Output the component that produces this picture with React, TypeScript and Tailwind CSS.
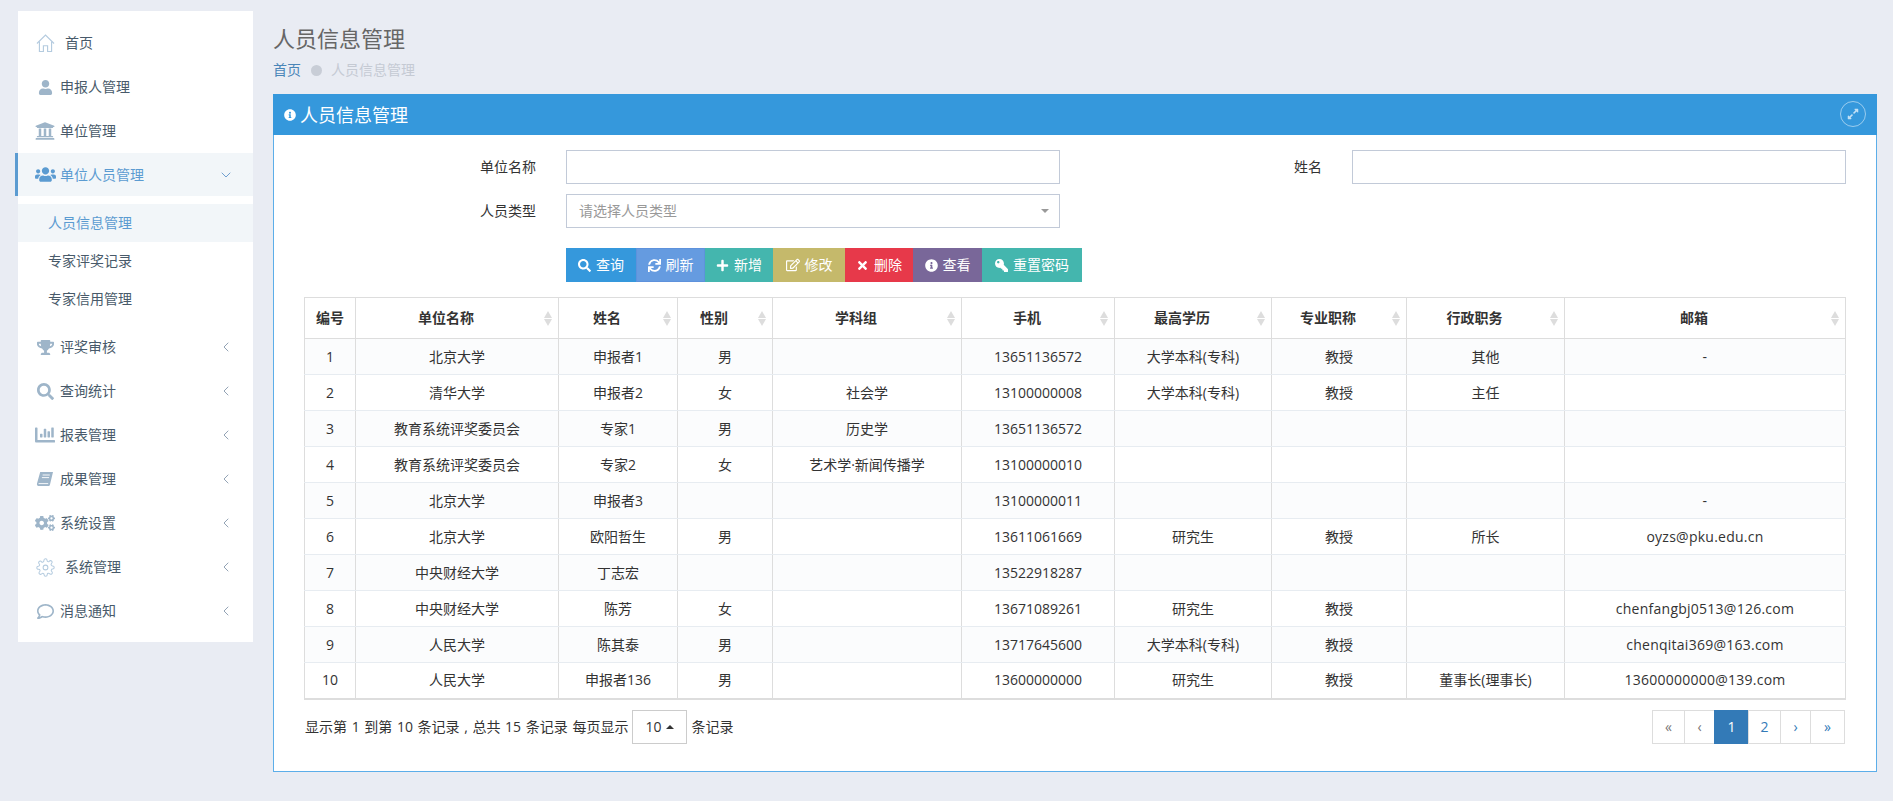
import type { ReactNode } from 'react';
import { ChevronDown, ChevronLeft } from 'lucide-react';
import {
  FaChartBar,
  FaCogs,
  FaExpandAlt,
  FaInfoCircle,
  FaKey,
  FaPlus,
  FaRegComment,
  FaRegEdit,
  FaSearch,
  FaSync,
  FaTimes,
  FaTrophy,
  FaUniversity,
  FaUser,
  FaUsers,
} from 'react-icons/fa';

const rows = [
  ['1', '北京大学', '申报者1', '男', '', '13651136572', '大学本科(专科)', '教授', '其他', '-'],
  ['2', '清华大学', '申报者2', '女', '社会学', '13100000008', '大学本科(专科)', '教授', '主任', ''],
  ['3', '教育系统评奖委员会', '专家1', '男', '历史学', '13651136572', '', '', '', ''],
  ['4', '教育系统评奖委员会', '专家2', '女', '艺术学·新闻传播学', '13100000010', '', '', '', ''],
  ['5', '北京大学', '申报者3', '', '', '13100000011', '', '', '', '-'],
  ['6', '北京大学', '欧阳哲生', '男', '', '13611061669', '研究生', '教授', '所长', 'oyzs@pku.edu.cn'],
  ['7', '中央财经大学', '丁志宏', '', '', '13522918287', '', '', '', ''],
  ['8', '中央财经大学', '陈芳', '女', '', '13671089261', '研究生', '教授', '', 'chenfangbj0513@126.com'],
  ['9', '人民大学', '陈其泰', '男', '', '13717645600', '大学本科(专科)', '教授', '', 'chenqitai369@163.com'],
  ['10', '人民大学', '申报者136', '男', '', '13600000000', '研究生', '教授', '董事长(理事长)', '13600000000@139.com'],
];

const columns = [
  { title: '编号', width: 'w-[51px]' },
  { title: '单位名称', width: 'w-[203px]' },
  { title: '姓名', width: 'w-[119px]' },
  { title: '性别', width: 'w-[95px]' },
  { title: '学科组', width: 'w-[189px]' },
  { title: '手机', width: 'w-[153px]' },
  { title: '最高学历', width: 'w-[157px]' },
  { title: '专业职称', width: 'w-[135px]' },
  { title: '行政职务', width: 'w-[158px]' },
  { title: '邮箱', width: 'w-[281px]' },
];

function HomeIcon() {
  return (
    <svg viewBox="0 0 20 20" className="h-[19px] w-[19px]" fill="none" stroke="#b4cbdf" strokeWidth="1.2">
      <path d="M1 10 10 1.2 19 10" />
      <path d="M3.6 8v10.4h4.2v-6h4.4v6h4.2V8" />
    </svg>
  );
}

// fa 4 style slanted book
function BookIcon() {
  return (
    <svg viewBox="0 0 18 16" className="h-[16px] w-[18px]">
      <path d="M4.2 1H17l-3 12.4c-.2.9-.8 1.6-2 1.6H3C1.4 15 .6 13.8 1 12.4z" fill="currentColor" />
      <path d="M6.6 4h7.2M5.9 6.6h7.2M2.6 12.6h9.6" stroke="#ffffff" strokeWidth="0.9" fill="none" />
    </svg>
  );
}

function GearIcon() {
  return (
    <svg viewBox="0 0 24 24" className="h-[19px] w-[19px]" fill="none" stroke="#b4cbdf" strokeWidth="1.3">
      <circle cx="12" cy="12" r="3" />
      <path d="M19.4 15a1.6 1.6 0 0 0 .3 1.8l.1.1a2 2 0 1 1-2.8 2.8l-.1-.1a1.6 1.6 0 0 0-2.7 1.1V21a2 2 0 1 1-4 0v-.1a1.6 1.6 0 0 0-2.7-1.1l-.1.1a2 2 0 1 1-2.8-2.8l.1-.1a1.6 1.6 0 0 0-1.1-2.7H3a2 2 0 1 1 0-4h.1a1.6 1.6 0 0 0 1.1-2.7l-.1-.1a2 2 0 1 1 2.8-2.8l.1.1a1.6 1.6 0 0 0 1.8.3H9a1.6 1.6 0 0 0 1-1.5V3a2 2 0 1 1 4 0v.1a1.6 1.6 0 0 0 2.7 1.1l.1-.1a2 2 0 1 1 2.8 2.8l-.1.1a1.6 1.6 0 0 0-.3 1.8V9a1.6 1.6 0 0 0 1.5 1H21a2 2 0 1 1 0 4h-.1a1.6 1.6 0 0 0-1.5 1z" />
    </svg>
  );
}

function MenuItem({
  icon,
  label,
  textGap = 'ml-1',
  active = false,
  arrow = true,
}: {
  icon: ReactNode;
  label: string;
  textGap?: string;
  active?: boolean;
  arrow?: boolean;
}) {
  return (
    <div className={`relative flex items-center pl-4 text-sm ${active ? 'h-[43px] bg-[#f2f6f9] text-[#5b9bd1]' : 'h-11 text-[#485a6a]'}`}>
      {active && <span className="absolute -left-[3px] top-0 h-full w-[3px] bg-[#5b9bd1]" />}
      <span className={`flex w-[22px] justify-center ${active ? 'text-[#5b9bd1]' : 'text-[#9eb5c9]'}`}>{icon}</span>
      <span className={textGap}>{label}</span>
      {active && <ChevronDown className="absolute right-[19px] h-4 w-4 text-[#6f9fd0]" strokeWidth={1.5} />}
      {!active && arrow && <ChevronLeft className="absolute right-[19px] h-4 w-4 text-[#93a3b5]" strokeWidth={1.5} />}
    </div>
  );
}

function SubItem({ label, active = false }: { label: string; active?: boolean }) {
  return (
    <div className={`flex h-[38px] items-center pl-[30px] text-sm ${active ? 'bg-[#f2f6f9] text-[#5b9bd1]' : 'text-[#485a6a]'}`}>
      {label}
    </div>
  );
}

function Sidebar() {
  return (
    <aside className="ml-[18px] mt-[11px] h-[631px] w-[235px] shrink-0 bg-white pt-[10px]">
      <MenuItem icon={<HomeIcon />} label="首页" textGap="ml-[9px]" arrow={false} />
      <MenuItem icon={<FaUser size={15} />} label="申报人管理" arrow={false} />
      <MenuItem icon={<FaUniversity size={20} />} label="单位管理" arrow={false} />
      <MenuItem icon={<FaUsers size={21} />} label="单位人员管理" active />
      <div className="mb-[7px] mt-[8px]">
        <SubItem label="人员信息管理" active />
        <SubItem label="专家评奖记录" />
        <SubItem label="专家信用管理" />
      </div>
      <MenuItem icon={<FaTrophy size={17} />} label="评奖审核" />
      <MenuItem icon={<FaSearch size={17} />} label="查询统计" />
      <MenuItem icon={<FaChartBar size={20} />} label="报表管理" />
      <MenuItem icon={<BookIcon />} label="成果管理" />
      <MenuItem icon={<FaCogs size={20} />} label="系统设置" />
      <MenuItem icon={<GearIcon />} label="系统管理" textGap="ml-[9px]" />
      <MenuItem icon={<FaRegComment size={17} />} label="消息通知" />
    </aside>
  );
}

function ActionButton({ icon, label, className }: { icon: ReactNode; label: string; className: string }) {
  return (
    <button className={`flex h-[34px] items-center justify-center gap-[5px] text-sm text-white ${className}`}>
      {icon}
      {label}
    </button>
  );
}

function SortArrows() {
  return (
    <span className="absolute right-[6px] top-[13px] flex flex-col gap-px">
      <span className="h-0 w-0 border-x-[4px] border-b-[7px] border-x-transparent border-b-[#dddddd]" />
      <span className="h-0 w-0 border-x-[4px] border-t-[7px] border-x-transparent border-t-[#dddddd]" />
    </span>
  );
}

function PageCell({ label, width, active = false, muted = false }: { label: string; width: string; active?: boolean; muted?: boolean }) {
  return (
    <span
      className={`-ml-px flex h-[34px] items-center justify-center border text-sm ${width} ${
        active ? 'border-[#337ab7] bg-[#337ab7] text-white' : `border-[#dddddd] bg-white ${muted ? 'text-[#777777]' : 'text-[#337ab7]'}`
      }`}
    >
      {label}
    </span>
  );
}

export default function App() {
  return (
    <div className="flex h-[801px] w-full overflow-hidden bg-[#e9ecf3] font-['Open_Sans','Noto_Sans_CJK_SC',sans-serif] text-sm text-[#333333]">
      <Sidebar />
      <main className="ml-[20px] w-[1604px] shrink-0">
        <h1 className="mt-[22px] h-8 text-[22px] leading-8 text-[#666666]">人员信息管理</h1>
        <div className="mt-[6px] flex h-5 items-center leading-5">
          <span className="text-[#4a86b8]">首页</span>
          <span className="ml-[10px] h-[11px] w-[11px] rounded-full bg-[#c8cdd6]" />
          <span className="ml-[9px] text-[#c5cad3]">人员信息管理</span>
        </div>

        <section className="mt-[14px] h-[678px] border border-[#5caee9] bg-white">
          <div className="relative -mx-px -mt-px flex h-[41px] items-center bg-[#3598dc] pl-[11px] text-white">
            <FaInfoCircle size={12} />
            <span className="ml-[4px] text-lg">人员信息管理</span>
            <span className="absolute right-[11px] top-[7px] flex h-[26px] w-[26px] items-center justify-center rounded-full border border-white/50 text-white/70">
              <FaExpandAlt size={12} />
            </span>
          </div>

          <div className="mt-[15px] flex h-[34px] items-center">
            <label className="w-[262px] text-right">单位名称</label>
            <input className="ml-[30px] h-[34px] w-[494px] border border-[#c2cad8] bg-white" />
            <label className="w-[262px] text-right">姓名</label>
            <input className="ml-[30px] h-[34px] w-[494px] border border-[#c2cad8] bg-white" />
          </div>
          <div className="mt-[10px] flex h-[34px] items-center">
            <label className="w-[262px] text-right">人员类型</label>
            <div className="relative ml-[30px] flex h-[34px] w-[494px] items-center border border-[#c2cad8] pl-3 text-[#999999]">
              请选择人员类型
              <span className="absolute right-[10px] top-[14px] h-0 w-0 border-x-[4px] border-t-[4px] border-x-transparent border-t-[#999999]" />
            </div>
          </div>

          <div className="ml-[292px] mt-[20px] flex">
            <ActionButton icon={<FaSearch size={13} />} label="查询" className="w-[70px] bg-[#3598dc]" />
            <ActionButton icon={<FaSync size={13} />} label="刷新" className="w-[69px] border border-[#5e92dc] bg-[#659be0]" />
            <ActionButton icon={<FaPlus size={13} />} label="新增" className="w-[68px] bg-[#44b6ae]" />
            <ActionButton icon={<FaRegEdit size={14} />} label="修改" className="w-[72px] bg-[#c5b96b]" />
            <ActionButton icon={<FaTimes size={13} />} label="删除" className="w-[68px] bg-[#e7394a]" />
            <ActionButton icon={<FaInfoCircle size={13} />} label="查看" className="w-[69px] bg-[#796799]" />
            <ActionButton icon={<FaKey size={13} className="-scale-x-100" />} label="重置密码" className="w-[100px] bg-[#44b6ae]" />
          </div>

          <div className="ml-[30px] mt-[15px] w-[1541px]">
            <table className="w-full table-fixed border-collapse border-b-2 border-[#dddddd] text-center">
              <colgroup>
                {columns.map((c) => (
                  <col key={c.title} className={c.width} />
                ))}
              </colgroup>
              <thead>
                <tr className="h-[41px]">
                  {columns.map((c, i) => (
                    <th key={c.title} className={`relative border border-[#dddddd] font-semibold ${i > 0 ? 'pr-[22px]' : ''}`}>
                      {c.title}
                      {i > 0 && <SortArrows />}
                    </th>
                  ))}
                </tr>
              </thead>
              <tbody>
                {rows.map((row, i) => (
                  <tr key={row[0]} className={`h-9 ${i % 2 === 0 ? 'bg-[#fbfcfd]' : 'bg-white'}`}>
                    {row.map((cell, j) => (
                      <td key={j} className={`border-x border-y border-x-[#dddddd] border-y-[#e7ecf1] p-0 ${j === 9 ? 'tracking-[0.25px]' : ''}`}>
                        {cell}
                      </td>
                    ))}
                  </tr>
                ))}
              </tbody>
            </table>

            <div className="mt-[10px] flex h-[35px] items-center justify-between">
              <div className="flex items-center pl-px">
                <span className="[word-spacing:1px]">显示第 1 到第 10 条记录 , 总共 15 条记录 每页显示</span>
                <span className="ml-[4px] flex h-[34px] w-[55px] items-center justify-center gap-[5px] border border-[#cccccc]">
                  10
                  <span className="h-0 w-0 border-x-[4px] border-b-[4px] border-x-transparent border-b-[#333333]" />
                </span>
                <span className="ml-[4px]">条记录</span>
              </div>
              <div className="flex">
                <PageCell label="«" width="w-[33px]" muted />
                <PageCell label="‹" width="w-[31px]" muted />
                <PageCell label="1" width="w-[35px]" active />
                <PageCell label="2" width="w-[33px]" />
                <PageCell label="›" width="w-[31px]" />
                <PageCell label="»" width="w-[35px]" />
              </div>
            </div>
          </div>
        </section>
      </main>
    </div>
  );
}
